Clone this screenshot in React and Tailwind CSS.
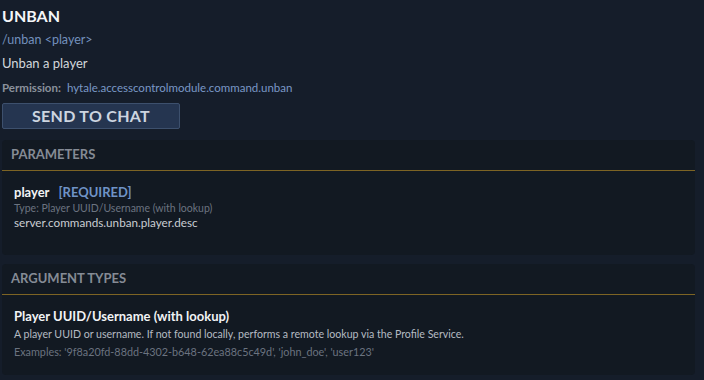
export default function App() {
  const font = { fontFamily: 'Lato, "Noto Sans", sans-serif' };
  return (
    <div className="w-[704px] h-[380px] overflow-hidden bg-[#151d2a] text-white" style={font}>
      <div className="px-[2px] pt-[5px]">
        <h1 className="text-[16px] font-bold leading-[22px] text-[#f4f6f8]">UNBAN</h1>
        <div className="mt-[5px] text-[12.5px] leading-[16px] text-[#7390bd]">/unban &lt;player&gt;</div>
        <div className="mt-[7px] text-[13px] leading-[16px] text-[#d3d7dc]">Unban a player</div>
        <div className="mt-[10px] flex items-center gap-[6px] text-[11.5px] leading-[14px]">
          <span className="font-bold text-[#8a919c]">Permission:</span>
          <span className="text-[#7a98c6]">hytale.accesscontrolmodule.command.unban</span>
        </div>
        <button className="mt-[8px] w-[178px] h-[26px] rounded-[2px] border border-[#3d506d] bg-[#253550] text-[16px] font-bold tracking-[0.3px] text-[#cdd5e0]">
          SEND TO CHAT
        </button>
      </div>

      <div className="mx-[2px] mt-[11px] w-[693px] rounded-[4px] bg-[#121922]">
        <div className="h-[31px] px-[9px] flex items-center border-b border-[#7d6424]">
          <span className="text-[13px] font-bold text-[#858b95]">PARAMETERS</span>
        </div>
        <div className="px-[12px] pt-[13px] pb-[25px]">
          <div className="flex items-center gap-[9px] text-[13px] leading-[16px] font-bold">
            <span className="text-[#f1f3f5]">player</span>
            <span className="text-[#6f93c6]">[REQUIRED]</span>
          </div>
          <div className="mt-[1px] text-[10.5px] leading-[14px] text-[#6b7380]">Type: Player UUID/Username (with lookup)</div>
          <div className="text-[11.7px] leading-[15px] text-[#c9cdd3]">server.commands.unban.player.desc</div>
        </div>
      </div>

      <div className="mx-[2px] mt-[9px] w-[693px] rounded-[4px] bg-[#121922]">
        <div className="h-[31px] px-[9px] flex items-center border-b border-[#7d6424]">
          <span className="text-[13px] font-bold text-[#858b95]">ARGUMENT TYPES</span>
        </div>
        <div className="px-[12px] pt-[13px] pb-[16px]">
          <div className="text-[13px] leading-[16px] font-bold text-[#f1f3f5]">Player UUID/Username (with lookup)</div>
          <div className="mt-[2px] text-[10.6px] leading-[16px] text-[#b5bbc3]">
            A player UUID or username. If not found locally, performs a remote lookup via the Profile Service.
          </div>
          <div className="mt-[2px] text-[10.8px] leading-[15px] text-[#6b7380]">
            Examples: '9f8a20fd-88dd-4302-b648-62ea88c5c49d', 'john_doe', 'user123'
          </div>
        </div>
      </div>
    </div>
  );
}
